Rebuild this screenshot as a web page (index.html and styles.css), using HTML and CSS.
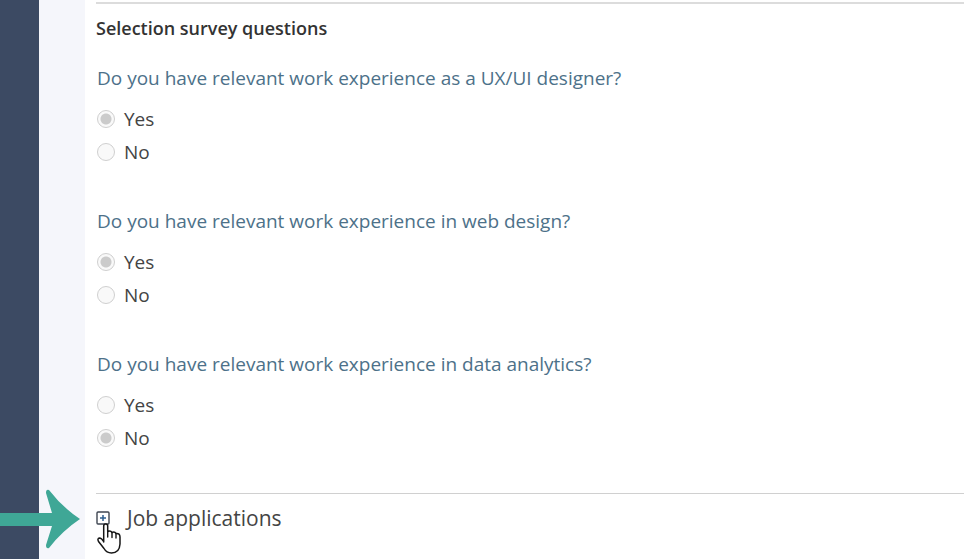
FILE: index.html
```html
<!DOCTYPE html>
<html lang="en">
<head>
  <meta charset="utf-8">
  <title>Job application</title>
  <link rel="stylesheet" href="styles.css">
</head>
<body>
<div class="page">
    <div class="sidebar"></div>
    <div class="gutter"></div>
    <main class="content">
        <form class="survey">
            <h2>Selection survey questions</h2>
            <fieldset>
                <legend>Do you have relevant work experience as a UX/UI designer?</legend>
                <label><input type="radio" name="uxui" checked disabled>Yes</label>
                <label><input type="radio" name="uxui" disabled>No</label>
            </fieldset>
            <fieldset>
                <legend>Do you have relevant work experience in web design?</legend>
                <label><input type="radio" name="web" checked disabled>Yes</label>
                <label><input type="radio" name="web" disabled>No</label>
            </fieldset>
            <fieldset>
                <legend>Do you have relevant work experience in data analytics?</legend>
                <label><input type="radio" name="data" disabled>Yes</label>
                <label><input type="radio" name="data" checked disabled>No</label>
            </fieldset>
        </form>
        <section class="applications">
            <button type="button" class="expand" aria-label="Expand job applications">
                <svg class="plus" viewBox="0 0 14 14">
                    <rect x="1" y="1" width="12" height="12" rx="1" fill="#fff" stroke="#3f4652" stroke-width="1.4"/>
                    <path d="M7 4v6M4 7h6" stroke="#2f5f90" stroke-width="1.5"/>
                </svg>
            </button>
            <h3>Job applications</h3>
            <svg class="arrow" viewBox="0 0 80 60">
                <path d="M0 24H52L46 4Q46 0 49 1Q62 18 80 30Q62 42 49 59Q46 60 46 56L52 37H0Z" fill="#3fa796"/>
            </svg>
            <svg class="hand" viewBox="0 0 24 31">
                <path d="M6.700 19V3Q6.700 1 8.700 1Q10.700 1 10.700 3V8.500Q13.500 7 15 9.500Q17.500 8 19 10.500Q23 10 23 14V21Q22.500 30 14.500 30Q9.500 30 7 25.500L1.500 18.500Q0 15.500 2.500 15Q4.500 15 6.700 18.500Z" fill="#fff" stroke="#161616" stroke-width="1.5" stroke-linejoin="round"/>
                <path d="M10.700 8v6M15 9.500v5M19 10.500v4.500" stroke="#161616" stroke-width="1.4" stroke-linecap="round"/>
            </svg>
        </section>
    </main>
</div>
</body>
</html>
```
FILE: styles.css
```css
html, body {
    margin: 0;
    height: 100%;
}
body {
    font-family: "Open Sans", sans-serif;
    font-size: 19px;
    color: #444;
    background: #fff;
}
.page {
    display: flex;
    min-height: 100%;
}
.sidebar {
    width: 39px;
    background: #3c4a63;
}
.gutter {
    width: 46px;
    background: #f5f6fb;
}
.content {
    flex: 1;
    padding: 2px 0 0 11px;
}
.survey {
    border-top: 2px solid #dcdcdc;
}
h2 {
    margin: 11px 0 23px;
    font-size: 18px;
    line-height: 26px;
    font-weight: 600;
    color: #333;
}
fieldset {
    margin: 0 0 39px;
    padding: 0 1px;
    border: 0;
}
legend {
    padding: 0;
    margin-bottom: 10px;
    line-height: 28px;
    color: #4d7189;
}
label {
    display: flex;
    align-items: center;
    gap: 9px;
    height: 33px;
}
input {
    appearance: none;
    box-sizing: border-box;
    width: 18px;
    height: 18px;
    margin: 0;
    border: 1px solid #cfcfcf;
    border-radius: 50%;
    background: #f9f9f9;
}
input:checked {
    background: radial-gradient(circle, #cbcbcb 5px, #f9f9f9 6px);
}
.applications {
    position: relative;
    display: flex;
    align-items: center;
    gap: 17px;
    height: 48px;
    border-top: 1px solid #d0d0d0;
}
.expand {
    display: flex;
    padding: 0;
    border: 0;
    background: none;
    cursor: pointer;
}
.plus {
    width: 14px;
    height: 14px;
}
h3 {
    margin: 0;
    font-size: 21px;
    line-height: 30px;
    font-weight: 400;
}
.arrow {
    position: absolute;
    left: -96px;
    top: -5px;
    width: 80px;
    height: 60px;
}
.hand {
    position: absolute;
    left: 1px;
    top: 29px;
    width: 24px;
    height: 31px;
}
```
